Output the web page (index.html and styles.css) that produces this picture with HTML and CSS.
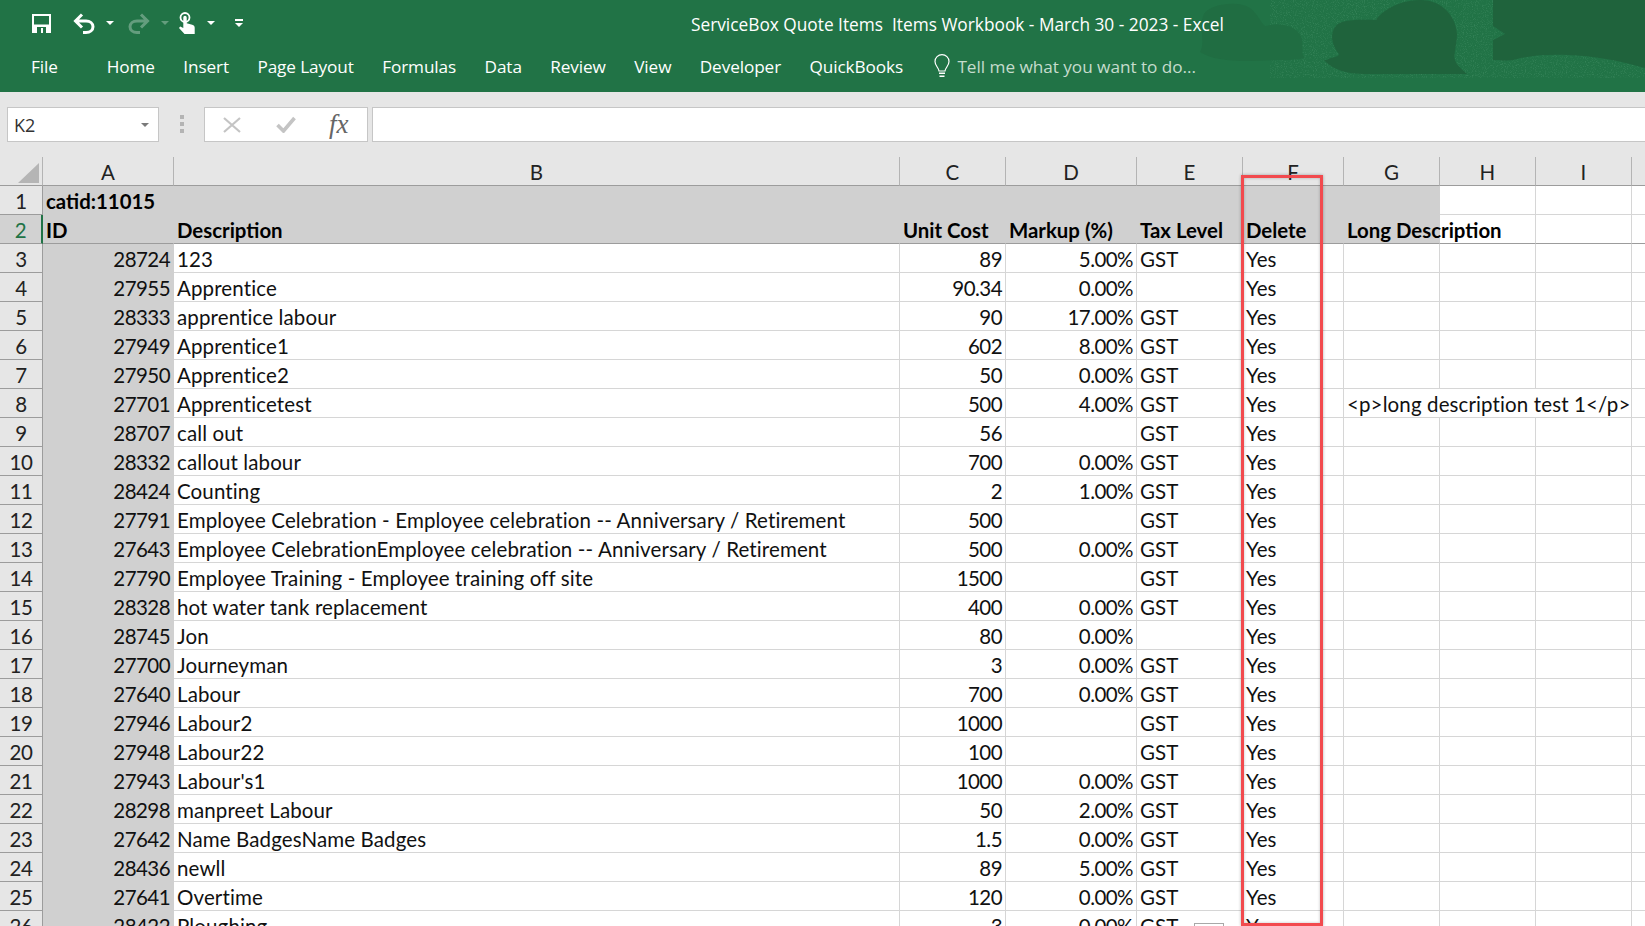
FILE: index.html
```html
<!DOCTYPE html>
<html lang="en">
<head>
<meta charset="utf-8">
<title>ServiceBox Quote Items Items Workbook - March 30 - 2023 - Excel</title>
<link rel="stylesheet" href="styles.css">
</head>
<body>
<header class="ribbon">
  <svg class="decor" width="495" height="78" viewBox="0 0 495 78" aria-hidden="true">
    <defs>
      <filter id="speck" x="0" y="0" width="100%" height="100%">
        <feTurbulence type="fractalNoise" baseFrequency="0.9" numOctaves="2" seed="4"/>
        <feColorMatrix values="0 0 0 0 0.2  0 0 0 0 0.5  0 0 0 0 0.32  0 0 0 3 -1.5"/>
      </filter>
    </defs>
    <rect x="120" y="0" width="375" height="78" filter="url(#speck)" opacity=".22"/>
    <path class="blob-faint" d="M50 52C56 42 48 26 54 14 60 4 88 0 100 8c10 8 12 18 16 18 14-4 34 0 36 14 1 12-1 14 3 18-10 2-18 2-30 2-30 2-60 2-75-8z"/>
    <path class="blob" d="M177 60c6-4 11-2 12-6-10-12-9-28 3-32 12-3 24-2 34-2 5-8 22-20 44-20 24 0 36 18 37 34 0 10-4 22-2 26 2 6 8 10 12 14H215c-18 0-32-4-41-14z"/>
    <path class="blob" d="M343 0h152v68c-20-6-40-10-60-12-30-2-50-2-72 4-6 1-20 0-20 0V40l12-6-12-8z"/>
  </svg>
  <div class="titlebar">
    <div class="qat">
      <svg class="ic-save" width="19" height="19" viewBox="0 0 19 19" aria-hidden="true"><path fill="#fff" fill-rule="evenodd" d="M0 0h19v19H0zM2 2v8.5h15V2zM5 13v6h9v-6z"/><rect x="9" y="14" width="2" height="5" fill="#fff"/></svg>
      <svg class="ic-undo" width="22" height="21" viewBox="0 0 22 21" aria-hidden="true"><path fill="none" stroke="#fff" stroke-width="3" d="M9 1.5 2.5 8 9 14.5M3 8h10c4 0 7 2.5 7 5.8S17 19.5 13 19.5h-3"/></svg>
      <span class="caret caret-undo"></span>
      <svg class="ic-redo" width="22" height="21" viewBox="0 0 22 21" aria-hidden="true"><path fill="none" stroke="#fff" stroke-width="3" d="M13 1.5 19.500 8 13 14.500M19 8H9c-4 0-7 2.500-7 5.800S5 19.500 9 19.500h3"/></svg>
      <span class="caret caret-redo"></span>
      <svg class="ic-touch" width="16" height="22" viewBox="0 0 16 22" aria-hidden="true"><circle cx="6" cy="5.500" r="4.500" fill="none" stroke="#fff" stroke-width="1.800"/><path fill="#fff" d="M4.300 5.500a1.700 1.700 0 0 1 3.400 0v5.800l5.500 1.500c1.600.5 2.500 1.300 2.500 3V22H5.500L0 16l1.200-1.500 3.100 1.500z"/></svg>
      <span class="caret caret-touch"></span>
      <span class="customize"><span class="customize-bar"></span><span class="caret"></span></span>
    </div>
    <div class="doc-title">ServiceBox Quote Items&nbsp; Items Workbook - March 30 - 2023 - Excel</div>
  </div>
  <nav class="tabs">
    <span class="tab tab-file">File</span>
    <span class="tab">Home</span>
    <span class="tab">Insert</span>
    <span class="tab">Page Layout</span>
    <span class="tab">Formulas</span>
    <span class="tab">Data</span>
    <span class="tab">Review</span>
    <span class="tab">View</span>
    <span class="tab">Developer</span>
    <span class="tab">QuickBooks</span>
    <span class="tell">
      <svg width="16" height="24" viewBox="0 0 16 24" aria-hidden="true"><path fill="none" stroke="#fff" stroke-width="1.200" d="M5 17c0-3-4-5-4-9.500a7 6.800 0 0 1 14 0C15 12 11 14 11 17z"/><path fill="#fff" d="M5 18.500h6V20H5zM5.500 21.500h5V23h-5z"/></svg>
      <span class="tell-text">Tell me what you want to do...</span>
    </span>
  </nav>
</header>

<section class="formula-bar">
  <div class="name-box"><span>K2</span><span class="caret caret-grey"></span></div>
  <div class="grip"><i></i><i></i><i></i></div>
  <div class="fx-box">
    <svg width="18" height="16" viewBox="0 0 18 16" aria-hidden="true"><path fill="none" stroke="#c4c4c4" stroke-width="2.200" d="M1 1l16 14M17 1 1 15"/></svg>
    <svg width="20" height="17" viewBox="0 0 20 17" aria-hidden="true"><path fill="none" stroke="#c4c4c4" stroke-width="3.600" d="M1.500 9l6 6L18.500 2"/></svg>
    <span class="fx">fx</span>
  </div>
  <div class="formula-input"></div>
</section>

<main class="sheet">
  <table class="grid">
    <colgroup>
      <col class="w-hdr"><col class="w-a"><col class="w-b"><col class="w-c"><col class="w-d"><col class="w-e"><col class="w-f"><col class="w-g"><col class="w-h"><col class="w-i"><col class="w-j">
    </colgroup>
    <thead>
      <tr><th class="corner"><span class="corner-tri"></span></th><th>A</th><th>B</th><th>C</th><th>D</th><th>E</th><th>F</th><th>G</th><th>H</th><th>I</th><th></th></tr>
    </thead>
    <tbody>
      <tr class="band"><th>1</th><td class="fill b">catid:11015</td><td class="fill"></td><td class="fill"></td><td class="fill"></td><td class="fill"></td><td class="fill"></td><td class="fill"></td><td></td><td></td><td></td></tr>
      <tr class="band band-2"><th class="active">2</th><td class="fill b">ID</td><td class="fill b">Description</td><td class="fill b">Unit Cost</td><td class="fill b">Markup (%)</td><td class="fill b">Tax Level</td><td class="fill b">Delete</td><td class="fill b">Long Description</td><td></td><td></td><td></td></tr>
      <tr><th>3</th><td class="fill n">28724</td><td>123</td><td class="n">89</td><td class="n">5.00%</td><td>GST</td><td>Yes</td><td></td><td></td><td></td><td></td></tr>
      <tr><th>4</th><td class="fill n">27955</td><td>Apprentice</td><td class="n">90.34</td><td class="n">0.00%</td><td></td><td>Yes</td><td></td><td></td><td></td><td></td></tr>
      <tr><th>5</th><td class="fill n">28333</td><td>apprentice labour</td><td class="n">90</td><td class="n">17.00%</td><td>GST</td><td>Yes</td><td></td><td></td><td></td><td></td></tr>
      <tr><th>6</th><td class="fill n">27949</td><td>Apprentice1</td><td class="n">602</td><td class="n">8.00%</td><td>GST</td><td>Yes</td><td></td><td></td><td></td><td></td></tr>
      <tr><th>7</th><td class="fill n">27950</td><td>Apprentice2</td><td class="n">50</td><td class="n">0.00%</td><td>GST</td><td>Yes</td><td></td><td></td><td></td><td></td></tr>
      <tr><th>8</th><td class="fill n">27701</td><td>Apprenticetest</td><td class="n">500</td><td class="n">4.00%</td><td>GST</td><td>Yes</td><td colspan="3">&lt;p&gt;long description test 1&lt;/p&gt;</td><td></td></tr>
      <tr><th>9</th><td class="fill n">28707</td><td>call out</td><td class="n">56</td><td class="n"></td><td>GST</td><td>Yes</td><td></td><td></td><td></td><td></td></tr>
      <tr><th>10</th><td class="fill n">28332</td><td>callout labour</td><td class="n">700</td><td class="n">0.00%</td><td>GST</td><td>Yes</td><td></td><td></td><td></td><td></td></tr>
      <tr><th>11</th><td class="fill n">28424</td><td>Counting</td><td class="n">2</td><td class="n">1.00%</td><td>GST</td><td>Yes</td><td></td><td></td><td></td><td></td></tr>
      <tr><th>12</th><td class="fill n">27791</td><td>Employee Celebration - Employee celebration -- Anniversary / Retirement</td><td class="n">500</td><td class="n"></td><td>GST</td><td>Yes</td><td></td><td></td><td></td><td></td></tr>
      <tr><th>13</th><td class="fill n">27643</td><td>Employee CelebrationEmployee celebration -- Anniversary / Retirement</td><td class="n">500</td><td class="n">0.00%</td><td>GST</td><td>Yes</td><td></td><td></td><td></td><td></td></tr>
      <tr><th>14</th><td class="fill n">27790</td><td>Employee Training - Employee training off site</td><td class="n">1500</td><td class="n"></td><td>GST</td><td>Yes</td><td></td><td></td><td></td><td></td></tr>
      <tr><th>15</th><td class="fill n">28328</td><td>hot water tank replacement</td><td class="n">400</td><td class="n">0.00%</td><td>GST</td><td>Yes</td><td></td><td></td><td></td><td></td></tr>
      <tr><th>16</th><td class="fill n">28745</td><td>Jon</td><td class="n">80</td><td class="n">0.00%</td><td></td><td>Yes</td><td></td><td></td><td></td><td></td></tr>
      <tr><th>17</th><td class="fill n">27700</td><td>Journeyman</td><td class="n">3</td><td class="n">0.00%</td><td>GST</td><td>Yes</td><td></td><td></td><td></td><td></td></tr>
      <tr><th>18</th><td class="fill n">27640</td><td>Labour</td><td class="n">700</td><td class="n">0.00%</td><td>GST</td><td>Yes</td><td></td><td></td><td></td><td></td></tr>
      <tr><th>19</th><td class="fill n">27946</td><td>Labour2</td><td class="n">1000</td><td class="n"></td><td>GST</td><td>Yes</td><td></td><td></td><td></td><td></td></tr>
      <tr><th>20</th><td class="fill n">27948</td><td>Labour22</td><td class="n">100</td><td class="n"></td><td>GST</td><td>Yes</td><td></td><td></td><td></td><td></td></tr>
      <tr><th>21</th><td class="fill n">27943</td><td>Labour's1</td><td class="n">1000</td><td class="n">0.00%</td><td>GST</td><td>Yes</td><td></td><td></td><td></td><td></td></tr>
      <tr><th>22</th><td class="fill n">28298</td><td>manpreet Labour</td><td class="n">50</td><td class="n">2.00%</td><td>GST</td><td>Yes</td><td></td><td></td><td></td><td></td></tr>
      <tr><th>23</th><td class="fill n">27642</td><td>Name BadgesName Badges</td><td class="n">1.5</td><td class="n">0.00%</td><td>GST</td><td>Yes</td><td></td><td></td><td></td><td></td></tr>
      <tr><th>24</th><td class="fill n">28436</td><td>newll</td><td class="n">89</td><td class="n">5.00%</td><td>GST</td><td>Yes</td><td></td><td></td><td></td><td></td></tr>
      <tr><th>25</th><td class="fill n">27641</td><td>Overtime</td><td class="n">120</td><td class="n">0.00%</td><td>GST</td><td>Yes</td><td></td><td></td><td></td><td></td></tr>
      <tr><th>26</th><td class="fill n">28422</td><td>Ploughing</td><td class="n">3</td><td class="n">0.00%</td><td>GST</td><td>Yes</td><td></td><td></td><td></td><td></td></tr>
    </tbody>
  </table>
  <div class="paste-box"></div>
  <div class="highlight"></div>
</main>
</body>
</html>
```
FILE: styles.css
```css
* { box-sizing: border-box; }
html, body { margin: 0; height: 926px; overflow: hidden; background: #fff; }
body { font-family: "Open Sans", "Liberation Sans", sans-serif; position: relative; }

/* ribbon */
.ribbon { position: relative; height: 92px; background: #217346; color: #fff; overflow: hidden; }
.decor { position: absolute; right: 0; top: 0; }
.blob { fill: #1f633c; }
.blob-faint { fill: #206d42; }
.titlebar { position: relative; display: flex; align-items: center; height: 46px; }
.qat { display: flex; align-items: center; width: 691px; padding-left: 32px; }
.ic-undo { margin-left: 22px; }
.caret { display: block; width: 0; height: 0; border-left: 4px solid transparent; border-right: 4px solid transparent; border-top: 4px solid #fff; }
.caret-undo { margin-left: 11px; }
.ic-redo { margin-left: 14px; opacity: .3; }
.caret-redo { margin-left: 11px; opacity: .3; }
.ic-touch { margin-left: 10px; }
.caret-touch { margin-left: 12px; }
.customize { display: flex; flex-direction: column; align-items: center; gap: 2px; margin-left: 20px; }
.customize-bar { width: 8px; height: 2px; background: #fff; }
.doc-title { font-size: 17.3px; white-space: nowrap; margin-top: 3px; }
.tabs { position: relative; display: flex; align-items: center; gap: 28.4px; height: 38px; padding: 2px 0 0 31px; font-size: 17.2px; letter-spacing: -.1px; }
.tab-file { margin-right: 20.5px; }
.tell { display: flex; align-items: center; gap: 7px; margin-left: 3px; letter-spacing: -.03px; }
.tell-text { color: #c5dccd; }

/* formula bar */
.formula-bar { display: flex; align-items: flex-start; height: 65px; padding: 15px 0 0 7px; background: #e6e6e6; }
.name-box { display: flex; align-items: center; justify-content: space-between; width: 152px; height: 35px; padding: 0 9px 0 6px; background: #fff; border: 1px solid #c6c6c6; font-size: 18px; color: #333; }
.caret-grey { border-top-color: #7a7a7a; }
.grip { display: flex; flex-direction: column; align-items: center; gap: 3px; width: 45px; padding-top: 8px; }
.grip i { display: block; width: 4px; height: 4px; background: #b4b4b4; }
.fx-box { display: flex; align-items: center; width: 164px; height: 35px; padding-left: 18px; gap: 35px; background: #fff; border: 1px solid #c6c6c6; }
.fx { font-family: "Liberation Serif", serif; font-style: italic; font-size: 27px; color: #666; margin-left: -2px; }
.formula-input { flex: 1; height: 35px; margin-left: 4px; background: #fff; border: 1px solid #c6c6c6; border-right: 0; }

/* sheet */
.sheet { position: relative; }
.grid { table-layout: fixed; width: 1691px; border-collapse: separate; border-spacing: 0; font-family: Lato, "Liberation Sans", sans-serif; font-size: 20.5px; letter-spacing: .12px; color: #111; }
.w-hdr { width: 43px; } .w-a { width: 131px; } .w-b { width: 726px; } .w-c { width: 106px; } .w-d { width: 131px; }
.w-e { width: 106px; } .w-f { width: 101px; } .w-g { width: 96px; } .w-h { width: 96px; } .w-i { width: 96px; } .w-j { width: 59px; }
.grid td, .grid tbody th { height: 29px; padding: 2px 0 0; line-height: 26px; white-space: nowrap; vertical-align: top; }
.grid thead th { height: 29px; padding: 2px 0 0; background: #e6e6e6; font-weight: 400; color: #222; line-height: 26px; vertical-align: top; border-right: 1px solid #b4b4b4; border-bottom: 1px solid #9c9c9c; }
.grid tbody th { background: #e6e6e6; font-weight: 400; letter-spacing: -.3px; color: #222; border-right: 1px solid #9c9c9c; border-bottom: 1px solid #9c9c9c; }
.grid th.active { background: #d2d2d2; color: #217346; border-right: 2px solid #217346; }
.grid td { padding: 2px 3px 0; border-right: 1px solid #d6d6d6; border-bottom: 1px solid #d6d6d6; overflow: visible; }
.grid td.fill { background: #d0d0d0; border-color: #d0d0d0; }
.grid td.n { text-align: right; letter-spacing: -.55px; }
.grid td.b { font-weight: 700; font-size: 20.4px; letter-spacing: 0; color: #000; }
.band-2 td { border-bottom-color: #9c9c9c !important; }
.corner { position: relative; }
.corner-tri { position: absolute; left: 18px; bottom: 2px; width: 0; height: 0; border-left: 21px solid transparent; border-bottom: 20px solid #b5b5b5; }
.highlight { position: absolute; left: 1241px; top: 18px; width: 82px; height: 751px; border: 3px solid #f24a4e; box-shadow: 0 0 3px rgba(0,0,0,.3), inset 0 0 3px rgba(0,0,0,.25); }
.paste-box { position: absolute; left: 1194px; top: 766px; width: 30px; height: 10px; background: #fff; border: 1px solid #a8a8a8; }
```
